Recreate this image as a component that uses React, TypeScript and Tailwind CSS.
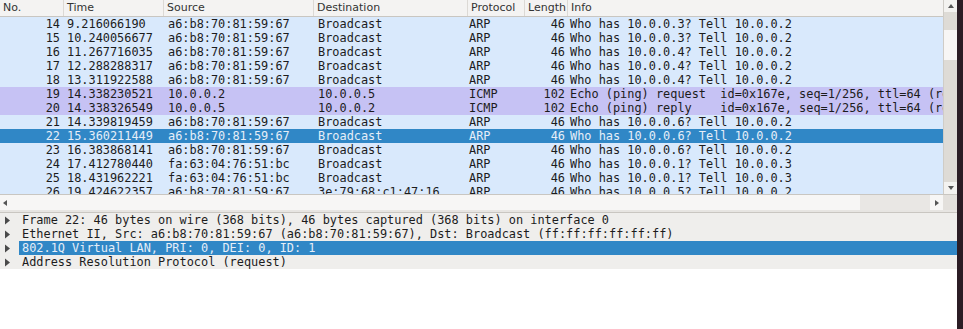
import React from 'react';

type Packet = {
  no: number;
  time: string;
  src: string;
  dst: string;
  proto: string;
  len: number;
  info: string;
};

const A6 = 'a6:b8:70:81:59:67';
const FA = 'fa:63:04:76:51:bc';

const packets: Packet[] = [
  { no: 14, time: '9.216066190', src: A6, dst: 'Broadcast', proto: 'ARP', len: 46, info: 'Who has 10.0.0.3? Tell 10.0.0.2' },
  { no: 15, time: '10.240056677', src: A6, dst: 'Broadcast', proto: 'ARP', len: 46, info: 'Who has 10.0.0.3? Tell 10.0.0.2' },
  { no: 16, time: '11.267716035', src: A6, dst: 'Broadcast', proto: 'ARP', len: 46, info: 'Who has 10.0.0.4? Tell 10.0.0.2' },
  { no: 17, time: '12.288288317', src: A6, dst: 'Broadcast', proto: 'ARP', len: 46, info: 'Who has 10.0.0.4? Tell 10.0.0.2' },
  { no: 18, time: '13.311922588', src: A6, dst: 'Broadcast', proto: 'ARP', len: 46, info: 'Who has 10.0.0.4? Tell 10.0.0.2' },
  { no: 19, time: '14.338230521', src: '10.0.0.2', dst: '10.0.0.5', proto: 'ICMP', len: 102, info: 'Echo (ping) request  id=0x167e, seq=1/256, ttl=64 (reply in 20)' },
  { no: 20, time: '14.338326549', src: '10.0.0.5', dst: '10.0.0.2', proto: 'ICMP', len: 102, info: 'Echo (ping) reply    id=0x167e, seq=1/256, ttl=64 (request in 19)' },
  { no: 21, time: '14.339819459', src: A6, dst: 'Broadcast', proto: 'ARP', len: 46, info: 'Who has 10.0.0.6? Tell 10.0.0.2' },
  { no: 22, time: '15.360211449', src: A6, dst: 'Broadcast', proto: 'ARP', len: 46, info: 'Who has 10.0.0.6? Tell 10.0.0.2' },
  { no: 23, time: '16.383868141', src: A6, dst: 'Broadcast', proto: 'ARP', len: 46, info: 'Who has 10.0.0.6? Tell 10.0.0.2' },
  { no: 24, time: '17.412780440', src: FA, dst: 'Broadcast', proto: 'ARP', len: 46, info: 'Who has 10.0.0.1? Tell 10.0.0.3' },
  { no: 25, time: '18.431962221', src: FA, dst: 'Broadcast', proto: 'ARP', len: 46, info: 'Who has 10.0.0.1? Tell 10.0.0.3' },
  { no: 26, time: '19.424622357', src: A6, dst: '3e:79:68:c1:47:16', proto: 'ARP', len: 46, info: 'Who has 10.0.0.5? Tell 10.0.0.2' },
];

const details = [
  'Frame 22: 46 bytes on wire (368 bits), 46 bytes captured (368 bits) on interface 0',
  'Ethernet II, Src: a6:b8:70:81:59:67 (a6:b8:70:81:59:67), Dst: Broadcast (ff:ff:ff:ff:ff:ff)',
  '802.1Q Virtual LAN, PRI: 0, DEI: 0, ID: 1',
  'Address Resolution Protocol (request)',
];

const SELECTED = 22;
const COLS = 'grid grid-cols-[63px_100px_150px_154px_57px_43px_376px]';

function rowClass(p: Packet) {
  if (p.no === SELECTED) return 'bg-[#3087c6] text-[#e6eef8]';
  if (p.proto === 'ICMP') return 'bg-[#c6c2f4] text-[#1c1c1c]';
  return 'bg-[#d9e9fc] text-[#1c1c1c]';
}

function Arrow({ dir }: { dir: 'up' | 'down' | 'left' | 'right' }) {
  const pts = {
    up: '1,6 4,2 7,6',
    down: '1,2 4,6 7,2',
    left: '6,1 2,4 6,7',
    right: '2,1 6,4 2,7',
  }[dir];
  return (
    <svg width="8" height="8" viewBox="0 0 8 8">
      <polygon points={pts} fill="#555" />
    </svg>
  );
}

export default function App() {
  return (
    <div className="w-[963px] h-[329px] flex bg-[#2b1d25] overflow-hidden">
      <div className="w-[957px] h-full flex flex-col bg-white">
        {/* Packet list */}
        <div className="flex h-[194px]">
          <div className="w-[943px] flex flex-col overflow-hidden">
            <div
              className={`${COLS} h-[17px] bg-[#f4f3f2] border-b border-[#c9c6c1] text-[11px] leading-[16px] text-[#333] font-['DejaVu_Sans',sans-serif]`}
            >
              {['No.', 'Time', 'Source', 'Destination', 'Protocol', 'Length', 'Info'].map((h, i) => (
                <div key={h} className={`pl-[3px] ${i > 0 ? 'border-l border-[#dcd9d5]' : ''}`}>
                  {h}
                </div>
              ))}
            </div>
            <div className="flex-1 overflow-hidden font-['DejaVu_Sans_Mono',monospace] text-[11.9px] leading-[14px]">
              {packets.map((p) => (
                <div key={p.no} className={`${COLS} h-[14px] whitespace-pre ${rowClass(p)}`}>
                  <div className="text-right pr-[3px]">{p.no}</div>
                  <div className="pl-[4px] overflow-hidden">{p.time}</div>
                  <div className="pl-[5px] overflow-hidden">{p.src}</div>
                  <div className="pl-[5px] overflow-hidden">{p.dst}</div>
                  <div className="pl-[2px] overflow-hidden">{p.proto}</div>
                  <div className="text-right pr-[2px]">{p.len}</div>
                  <div className="pl-[3px] overflow-hidden">{p.info}</div>
                </div>
              ))}
            </div>
          </div>
          {/* vertical scrollbar */}
          <div className="w-[14px] flex flex-col bg-[#dedbd6] border-l border-[#cfccc7]">
            <div className="h-[12px] flex items-center justify-center bg-[#f3f2f0]">
              <Arrow dir="up" />
            </div>
            <div className="flex-1 pt-[18px]">
              <div className="h-[30px] bg-[#f7f6f5]" />
            </div>
            <div className="h-[12px] flex items-center justify-center bg-[#f3f2f0]">
              <Arrow dir="down" />
            </div>
          </div>
        </div>

        {/* horizontal scrollbar */}
        <div className="flex h-[16px] border-t border-[#c9c6c1] bg-[#e9e7e4]">
          <div className="w-[10px] flex items-center justify-center bg-[#f7f6f5]">
            <Arrow dir="left" />
          </div>
          <div className="w-[850px] bg-[#f7f6f5]" />
          <div className="flex-1" />
          <div className="w-[13px] flex items-center justify-center bg-[#f7f6f5]">
            <Arrow dir="right" />
          </div>
          <div className="w-[14px] bg-[#e3e0dc]" />
        </div>

        {/* splitter */}
        <div className="h-[3px] bg-[#e7e5e2] border-b border-[#c9c6c1]" />

        {/* packet details */}
        <div className="flex flex-col font-['DejaVu_Sans_Mono',monospace] text-[11.9px] leading-[14px] text-[#1c1c1c]">
          {details.map((d, i) => (
            <div key={d} className="flex h-[14px] bg-[#efeeec] whitespace-pre">
              <div className="w-[19px] flex items-center pl-[4px]">
                <svg width="7" height="9" viewBox="0 0 7 9">
                  <polygon points="1,0.5 6,4.5 1,8.5" fill="#4a4a4a" />
                </svg>
              </div>
              <div className={`flex-1 pl-[3px] ${i === 2 ? 'bg-[#3087c6] text-[#e6eef8]' : ''}`}>{d}</div>
            </div>
          ))}
        </div>
      </div>
    </div>
  );
}
